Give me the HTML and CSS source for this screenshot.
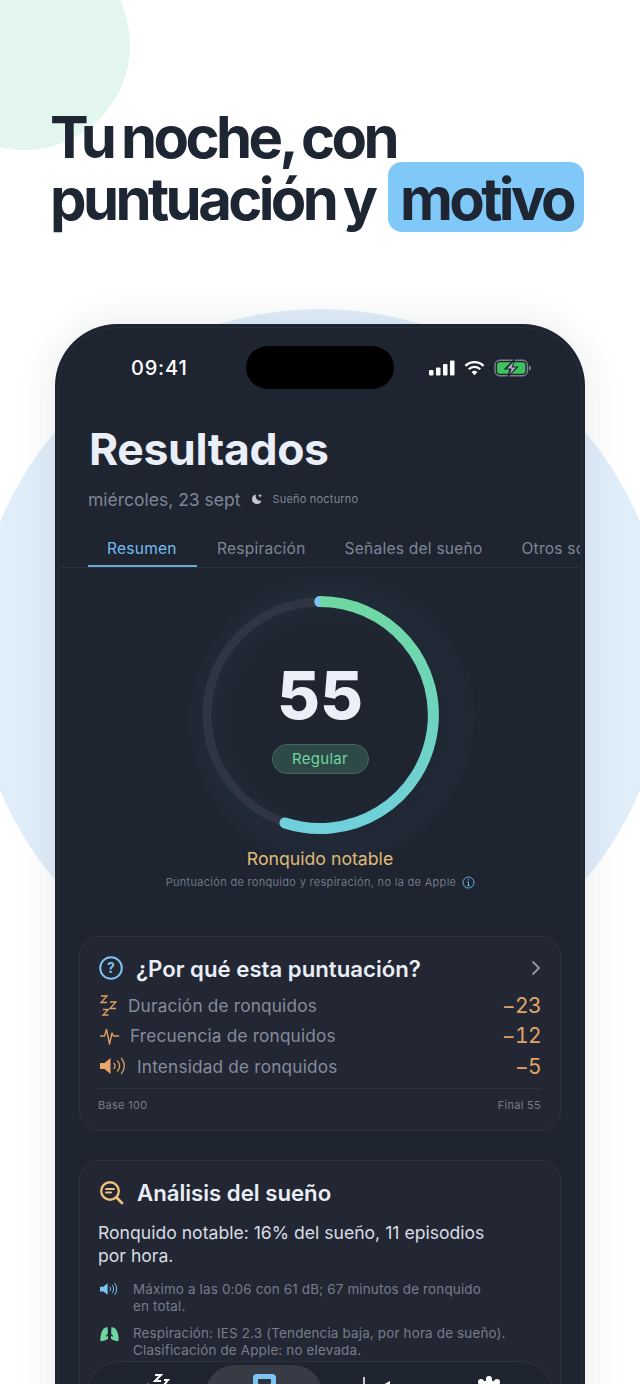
FILE: index.html
```html
<!DOCTYPE html>
<html lang="es">
<head>
  <meta charset="UTF-8">
  <title>Resultados</title>
  <link rel="stylesheet" href="styles.css">
</head>
<body>
  <div class="page">
    <div class="blob blob-green"></div>
    <div class="blob blob-blue"></div>

    <h1 class="headline">Tu noche, con<br>puntuación y <span class="mark">motivo</span></h1>

    <div class="phone">
      <div class="status">
        <span class="time">09:41</span>
        <div class="island"></div>
        <div class="status-icons">
          <svg width="26" height="16" viewBox="0 0 26 16"><rect x="0" y="10" width="4.5" height="5.5" rx="1" fill="#fff"/><rect x="7" y="7.5" width="4.5" height="8" rx="1" fill="#fff"/><rect x="14" y="4" width="4.5" height="11.5" rx="1" fill="#fff"/><rect x="21" y="0.5" width="4.5" height="15" rx="1" fill="#fff"/></svg>
          <svg width="21" height="16" viewBox="0 0 22 16" fill="none" stroke="#fff" stroke-width="2.4"><path d="M1.5 5.8a13.5 13.5 0 0 1 19 0"/><path d="M5 9.300a8.5 8.5 0 0 1 12 0"/><path d="M11 15.500 8 12.300a4.3 4.3 0 0 1 6 0z" fill="#fff" stroke="none"/></svg>
          <svg width="38" height="18" viewBox="0 0 37 17"><rect x="1" y="1" width="31.500" height="15" rx="4.5" fill="none" stroke="#7b818a" stroke-width="1.4"/><rect x="3" y="3" width="27.500" height="11" rx="2.5" fill="#3fc25d"/><path d="M34 6v5c1.400-.4 2-1.400 2-2.500S35.400 6.400 34 6z" fill="#7b818a"/><path d="M20 0 10.500 9.500h5L13.500 17l9.500-9.500h-5z" fill="#1e2430" stroke="#1e2430" stroke-width="1"/><path d="M19 2.500 12.800 9h4.400l-1.900 5.500 6.200-6.500h-4.400z" fill="#aab0ba"/></svg>
        </div>
      </div>

      <div class="title-block">
        <h2 class="title">Resultados</h2>
        <div class="date-row">
          <span class="date">miércoles, 23 sept</span>
          <svg class="moon" width="12" height="12" viewBox="0 0 12 12"><path d="M5 1.500a4.800 4.800 0 1 0 5.500 6A4.500 4.500 0 0 1 5 1.500z" fill="#c3c8d2"/><path d="M9 1.200v3M7.500 2.700h3" stroke="#c3c8d2" stroke-width="1"/></svg>
          <span class="sleep-kind">Sueño nocturno</span>
        </div>
      </div>

      <div class="tabs">
        <span class="tab tab-on">Resumen</span>
        <span class="tab">Respiración</span>
        <span class="tab">Señales del sueño</span>
        <span class="tab tab-cut">Otros sonidos</span>
      </div>

      <div class="score">
        <div class="gauge">
          <div class="gauge-glow"></div>
          <svg class="gauge-ring" width="250" height="250" viewBox="0 0 250 250" fill="none">
            <defs>
              <linearGradient id="arcFill" x1="0" y1="0" x2="0" y2="1">
                <stop offset="0" stop-color="#6fd8a2"/>
                <stop offset="1" stop-color="#6fd0dc"/>
              </linearGradient>
            </defs>
            <circle cx="125" cy="125" r="113" stroke="#2f3542" stroke-width="9"/>
            <path d="M125 11.500A113.500 113.500 0 1 1 90 233" stroke="url(#arcFill)" stroke-width="11" stroke-linecap="round"/>
            <path d="M125 6a5.500 5.500 0 0 0 0 11z" fill="#7cc2f6"/>
          </svg>
          <div class="gauge-text">
            <div class="num">55</div>
            <div class="badge">Regular</div>
          </div>
        </div>
        <div class="verdict">Ronquido notable</div>
        <div class="score-note">
          <span>Puntuación de ronquido y respiración, no la de Apple</span>
          <svg width="13" height="13" viewBox="0 0 13 13" fill="none" stroke="#6cb2e6" stroke-width="1"><circle cx="6.500" cy="6.500" r="5.500"/><path d="M6.500 6v3.500M5.300 5.800h1.200M5.200 9.500h2.600"/><circle cx="6.500" cy="3.700" r=".7" fill="#6cb2e6" stroke="none"/></svg>
        </div>
      </div>

      <section class="card card-why">
        <div class="card-head">
          <svg width="24" height="24" viewBox="0 0 24 24" fill="none"><circle cx="12" cy="12" r="10.800" stroke="#7cc4f4" stroke-width="2"/><text x="12" y="16.500" text-anchor="middle" class="q-mark">?</text></svg>
          <h3 class="card-title">¿Por qué esta puntuación?</h3>
          <svg class="chev" width="10" height="16" viewBox="0 0 10 16" fill="none" stroke="#9299a6" stroke-width="1.800" stroke-linecap="round" stroke-linejoin="round"><path d="M2 2l6 6-6 6"/></svg>
        </div>
        <div class="why-row">
          <svg width="17" height="21" viewBox="0 0 17 21" fill="none" stroke="#dd9f62" stroke-width="1.300"><path d="M1 1h6L1 7.500h6M10 7h6l-6 6.500h6M3 14.500h5.500L3 20h5.500"/></svg>
          <span class="why-label">Duración de ronquidos</span>
          <span class="why-val">−23</span>
        </div>
        <div class="why-row">
          <svg width="19" height="19" viewBox="0 0 19 19" fill="none" stroke="#dd9f62" stroke-width="1.400" stroke-linejoin="round"><path d="M0 10h4.500l2-6.500 3 14.500 2.500-11 1.500 3H19"/></svg>
          <span class="why-label">Frecuencia de ronquidos</span>
          <span class="why-val">−12</span>
        </div>
        <div class="why-row">
          <svg width="26" height="18" viewBox="0 0 26 18" fill="none"><path d="M0 6h4.500L10.500 1v16l-6-5H0z" fill="#eba768"/><path d="M14 6.500a3.500 3.500 0 0 1 0 5M17.500 4a7 7 0 0 1 0 10M21.500 1.500a11.500 11.500 0 0 1 0 15" stroke="#dd9f62" stroke-width="1.300" stroke-linecap="round"/></svg>
          <span class="why-label">Intensidad de ronquidos</span>
          <span class="why-val">−5</span>
        </div>
        <div class="why-foot">
          <span>Base 100</span>
          <span>Final 55</span>
        </div>
      </section>

      <section class="card card-sleep">
        <div class="card-head">
          <svg width="25" height="25" viewBox="0 0 25 25" fill="none"><circle cx="11" cy="11" r="8.800" stroke="#edc07f" stroke-width="2.400"/><path d="M17.500 17.500l5.500 5.500" stroke="#edc07f" stroke-width="2.800" stroke-linecap="round"/><path d="M7 9h8M7 12.500h5" stroke="#edc07f" stroke-width="2" stroke-linecap="round"/></svg>
          <h3 class="card-title">Análisis del sueño</h3>
        </div>
        <p class="lead">Ronquido notable: 16% del sueño, 11 episodios por hora.</p>
        <div class="fact">
          <svg width="20" height="14" viewBox="0 0 20 14" fill="none"><path d="M0 4.500h3.500L8 1v12L3.500 9.500H0z" fill="#7cc4f4"/><path d="M10.500 5a3 3 0 0 1 0 4M13 3a6 6 0 0 1 0 8M15.500 1a9 9 0 0 1 0 12" stroke="#7cc4f4" stroke-width="1" stroke-linecap="round"/></svg>
          <p>Máximo a las 0:06 con 61 dB; 67 minutos de ronquido<br>en total.</p>
        </div>
        <div class="fact">
          <svg width="20" height="16" viewBox="0 0 20 16" fill="none"><path d="M8 1C4.500 .5 2.800 3 1.500 6.500.6 9.500.2 12.500.5 15.500c3 0 6-.8 8-2.500zM12 1c3.500-.5 5.200 2 6.500 5.500.9 3 1.300 6 1 9-3 0-6-.8-8-2.500z" fill="#6fd6a0"/><path d="M10 0v7M10 7l-3.500 3.500M10 7l3.500 3.500" stroke="#1e2430" stroke-width="1.300"/></svg>
          <p>Respiración: IES 2.3 (Tendencia baja, por hora de sueño).<br>Clasificación de Apple: no elevada.</p>
        </div>
      </section>

      <nav class="tabbar">
        <svg class="nav-sleep" width="34" height="24" viewBox="0 0 34 24" fill="none" stroke="#fff" stroke-width="2"><path d="M15 1h6l-6 6h6M24 6h4l-4 5h4"/><path d="M9 11a11 11 0 1 0 13 13" stroke-width="3"/></svg>
        <div class="nav-on">
          <svg width="23" height="24" viewBox="0 0 23 24"><rect width="23" height="24" rx="4" fill="#7cc4f4"/><rect x="5" y="5" width="13" height="5" rx="1" fill="#2c3240"/></svg>
        </div>
        <svg class="nav-stats" width="28" height="24" viewBox="0 0 28 24" fill="none"><path d="M1 0v24" stroke="#fff" stroke-width="1.500"/><path d="M27 4 18 9v15h9z" fill="#fff"/></svg>
        <svg class="nav-gear" width="24" height="24" viewBox="0 0 24 24"><circle cx="12" cy="14" r="10" fill="#fff"/><circle cx="12" cy="3" r="3" fill="#fff"/><circle cx="4" cy="6" r="3" fill="#fff"/><circle cx="20" cy="6" r="3" fill="#fff"/></svg>
      </nav>
    </div>
  </div>
</body>
</html>
```

FILE: styles.css
```css
* {
  box-sizing: border-box;
}
html, body {
  margin: 0;
  padding: 0;
  background: #fff;
}
.page {
  position: relative;
  width: 640px;
  height: 1384px;
  overflow: hidden;
  padding-top: 106px;
  font-family: Inter, "Liberation Sans", sans-serif;
}
/* decorative circles */
.blob {
  position: absolute;
  border-radius: 50%;
}
.blob-green {
  left: -80px;
  top: -60px;
  width: 210px;
  height: 210px;
  background: #e3f6ed;
}
.blob-blue {
  left: -27px;
  top: 309px;
  width: 694px;
  height: 694px;
  background: #e0eefa;
}
.headline {
  position: relative;
  margin: 0 0 0 50px;
  font-size: 58px;
  line-height: 62px;
  font-weight: 700;
  letter-spacing: -3.6px;
  word-spacing: -2.5px;
  color: #1e2533;
}
.mark {
  display: inline-block;
  height: 70px;
  margin: -8px 0 -12px 6px;
  padding: 2px 11px 0 12px;
  line-height: 70px;
  border-radius: 14px;
  background: #7fc8f8;
}
/* phone */
.phone {
  position: relative;
  width: 530px;
  height: 1200px;
  margin: 94px 0 0 55px;
  border-radius: 62px;
  background: #1e2430;
  box-shadow: 0 0 40px rgba(30, 36, 48, .1);
  overflow: hidden;
  color: #e9eef7;
}
.phone::after {
  content: "";
  position: absolute;
  inset: 3px;
  border: 1px solid rgba(255, 255, 255, .05);
  border-radius: 59px;
  pointer-events: none;
}
.status {
  display: flex;
  align-items: center;
  height: 43px;
  margin-top: 22px;
  padding-left: 76px;
}
.time {
  width: 115px;
  font-size: 20px;
  font-weight: 500;
  letter-spacing: .8px;
  color: #fff;
}
.island {
  width: 148px;
  height: 43px;
  border-radius: 22px;
  background: #000;
}
.status-icons {
  display: flex;
  align-items: center;
  gap: 9px;
  margin-left: 35px;
}
.title-block {
  padding: 34px 0 0 34px;
}
.title {
  margin: 0;
  font-size: 44.500px;
  line-height: 52px;
  font-weight: 700;
  letter-spacing: -.35px;
}
.date-row {
  display: flex;
  align-items: center;
  margin-top: 12px;
  height: 24px;
}
.date {
  margin-left: -1px;
  font-size: 17.500px;
  color: #7f8796;
}
.moon {
  margin-left: 11px;
}
.sleep-kind {
  margin-left: 9px;
  font-size: 11px;
  letter-spacing: .2px;
  color: #7f8796;
}
.tabs {
  display: flex;
  gap: 1px;
  height: 41px;
  margin: 16px 5px 0;
  padding-left: 28px;
  border-bottom: 1px solid #2a303c;
  overflow: hidden;
  white-space: nowrap;
}
.tab {
  flex: none;
  padding: 10px 19px 0;
  height: 40px;
  font-size: 15.500px;
  line-height: 24px;
  letter-spacing: .25px;
  color: #7f8796;
}
.tab-on {
  min-width: 109px;
  color: #74bdf0;
  border-bottom: 2px solid #6aa9d6;
}
/* score gauge */
.score {
  display: flex;
  flex-direction: column;
  align-items: center;
}
.gauge {
  position: relative;
  width: 250px;
  height: 250px;
  margin-top: 22px;
}
.gauge-glow {
  position: absolute;
  inset: -30px;
  border-radius: 50%;
  background: radial-gradient(circle at 54% 52%, rgba(60, 100, 120, 0) 35%, rgba(60, 100, 120, .09) 55%, rgba(60, 100, 120, 0) 68%);
}
.gauge-ring {
  position: absolute;
  left: 0;
  top: 0;
}
.gauge-text {
  position: relative;
  display: flex;
  flex-direction: column;
  align-items: center;
  padding-top: 70px;
}
.num {
  font-size: 66px;
  line-height: 70px;
  font-weight: 800;
  color: #eaeff8;
}
.badge {
  width: 97px;
  height: 30px;
  margin-top: 14px;
  border: 1px solid #47665f;
  border-radius: 15px;
  background: #2e4a47;
  text-align: center;
  font-size: 15px;
  line-height: 28px;
  letter-spacing: .3px;
  color: #6fd6a0;
}
.verdict {
  margin-top: 7px;
  font-size: 17.700px;
  line-height: 24px;
  color: #e3bd79;
}
.score-note {
  display: flex;
  align-items: center;
  gap: 6px;
  margin-top: 2px;
  margin-left: 1px;
  font-size: 11px;
  line-height: 18px;
  letter-spacing: .3px;
  color: #6f7787;
}
/* cards */
.card {
  margin: 0 24px;
  border: 1px solid #2d3340;
  border-radius: 20px;
  background: #222733;
  padding: 0 19px 0 18px;
}
.card-why {
  height: 195px;
  margin-top: 45px;
  padding-top: 18px;
}
.card-sleep {
  height: 300px;
  margin-top: 29px;
  padding-top: 18px;
}
.card-head {
  display: flex;
  align-items: center;
  gap: 13px;
  height: 26px;
  padding-left: 1px;
}
.card-title {
  flex: 1;
  margin: 0;
  font-size: 22.200px;
  font-weight: 600;
  color: #e9eef7;
}
.q-mark {
  font-size: 14px;
  font-weight: 700;
  fill: #7cc4f4;
}
.why-row {
  display: flex;
  align-items: center;
  gap: 11px;
  height: 30.500px;
  padding-left: 2px;
}
.card-head + .why-row {
  margin-top: 9px;
}
.why-label {
  flex: 1;
  font-size: 17.200px;
  letter-spacing: .2px;
  color: #858c9c;
}
.why-val {
  font-size: 21px;
  font-variant-numeric: tabular-nums;
  letter-spacing: -.6px;
  color: #e0a468;
}
.why-foot {
  display: flex;
  justify-content: space-between;
  margin-top: 6px;
  padding-top: 8px;
  border-top: 1px solid #2d3340;
  font-size: 11px;
  line-height: 16px;
  letter-spacing: .3px;
  color: #767e8e;
}
.lead {
  width: 400px;
  margin: 16px 0 0;
  font-size: 17.600px;
  line-height: 23px;
  color: #d8dde5;
}
.fact {
  display: flex;
  gap: 14px;
  margin-top: 10px;
  padding-left: 2px;
}
.lead + .fact {
  margin-top: 14px;
}
.fact svg {
  flex: none;
  width: 19px;
  margin-top: 1px;
}
.fact p {
  margin: 0;
  font-size: 13.400px;
  line-height: 17px;
  letter-spacing: .18px;
  color: #767e8e;
  white-space: nowrap;
}
/* bottom bar, sits over the scrolling content */
.tabbar {
  position: absolute;
  left: 30px;
  top: 1037px;
  width: 470px;
  height: 90px;
  display: flex;
  align-items: flex-start;
  padding: 3px 0 0 52px;
  border: 1px solid #2d3340;
  border-radius: 36px;
  background: #1e2430;
}
.nav-sleep {
  margin: 9px 0 0 2px;
}
.nav-on {
  display: flex;
  justify-content: center;
  width: 118px;
  height: 60px;
  margin-left: 31px;
  padding-top: 9px;
  border-radius: 30px;
  background: #373b46;
}
.nav-stats {
  margin: 12px 0 0 40px;
}
.nav-gear {
  margin: 11px 0 0 86px;
}
```
